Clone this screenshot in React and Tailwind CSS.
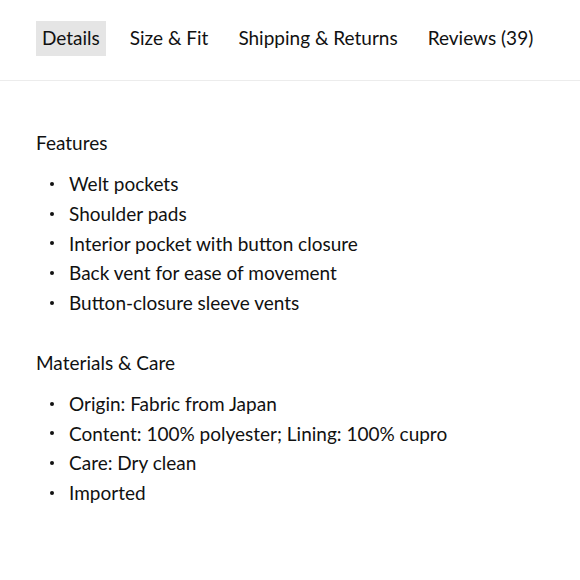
const tabs = ['Details', 'Size & Fit', 'Shipping & Returns', 'Reviews (39)'];

const sections = [
  {
    title: 'Features',
    items: [
      'Welt pockets',
      'Shoulder pads',
      'Interior pocket with button closure',
      'Back vent for ease of movement',
      'Button-closure sleeve vents',
    ],
  },
  {
    title: 'Materials & Care',
    items: [
      'Origin: Fabric from Japan',
      'Content: 100% polyester; Lining: 100% cupro',
      'Care: Dry clean',
      'Imported',
    ],
  },
];

export default function App() {
  return (
    <div className="min-h-screen bg-white text-[#111] font-['Lato',sans-serif] text-[19px]">
      {/* Tabs */}
      <div className="h-[81px] border-b border-[#ececec] pl-[36px] pt-[21px]">
        <div className="flex items-center gap-[18px]">
          {tabs.map((t, i) => (
            <button
              key={t}
              className={
                'h-[35px] px-[6px] pb-[3px] leading-none ' + (i === 0 ? 'bg-[#e5e5e5]' : '')
              }
            >
              {t}
            </button>
          ))}
        </div>
      </div>

      {/* Content */}
      <div className="px-[36px] pt-[47px]">
        {sections.map((s) => (
          <div key={s.title} className="mb-[30px]">
            <h3 className="leading-[30px]">{s.title}</h3>
            <ul className="mt-[11px]">
              {s.items.map((item) => (
                <li key={item} className="flex items-center leading-[29.75px]">
                  <span className="w-[33px] flex pl-[14px]">
                    <span className="w-[4px] h-[4px] rounded-full bg-[#111]" />
                  </span>
                  <span>{item}</span>
                </li>
              ))}
            </ul>
          </div>
        ))}
      </div>
    </div>
  );
}
